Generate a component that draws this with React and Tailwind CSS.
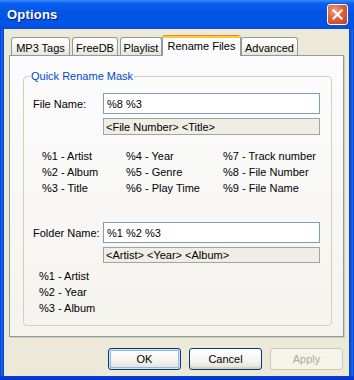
import React from 'react';

const fileVars = [
  ['%1 - Artist', '%4 - Year', '%7 - Track number'],
  ['%2 - Album', '%5 - Genre', '%8 - File Number'],
  ['%3 - Title', '%6 - Play Time', '%9 - File Name'],
];

const folderVars = ['%1 - Artist', '%2 - Year', '%3 - Album'];

const tabs = [
  { label: 'MP3 Tags', w: 'w-[59px]' },
  { label: 'FreeDB', w: 'w-[46px] ml-[2px]' },
  { label: 'Playlist', w: 'w-[42px] ml-[2px]' },
  { label: 'Rename Files', w: 'w-[79px]', active: true },
  { label: 'Advanced', w: 'w-[57px]' },
];

function TitleBar() {
  return (
    <div className="h-[29px] shrink-0 flex items-center justify-between pl-[7px] pr-[6px] bg-[linear-gradient(to_bottom,#3A8CFF_0%,#0A5FF0_12%,#0054E3_45%,#0055E8_85%,#0A4BD0_100%)]">
      <span className="text-white font-bold text-[13px] tracking-[0.2px] [text-shadow:1px_1px_0_#0A1E8C]">Options</span>
      <button className="w-[21px] h-[21px] rounded-[3px] border border-white flex items-center justify-center bg-[radial-gradient(circle_at_35%_30%,#F2A08A_0%,#E0603C_45%,#C63A1C_100%)]">
        <svg width="11" height="11" viewBox="0 0 11 11">
          <path d="M1.5 1.5 L9.5 9.5 M9.5 1.5 L1.5 9.5" stroke="white" strokeWidth="2.2" strokeLinecap="square" />
        </svg>
      </button>
    </div>
  );
}

function Tab({ label, w, active }) {
  if (active) {
    return (
      <div className={`${w} h-[21px] -mb-px relative z-10 flex flex-col rounded-t-[3px] border-x border-[#919B9C] bg-[#FCFCFE] overflow-hidden`}>
        <div className="h-[1px] bg-[#E68B2C]" />
        <div className="h-[2px] bg-[#FFC73C]" />
        <div className="flex-1 flex items-start justify-center pt-[1px]">{label}</div>
      </div>
    );
  }
  return (
    <div className={`${w} h-[18px] flex items-center justify-center pt-[2px] rounded-t-[3px] border border-b-0 border-[#919B9C] bg-[linear-gradient(to_bottom,#FFFFFF,#F3F3EF_60%,#E6E4DA)]`}>
      {label}
    </div>
  );
}

function Button({ children, primary, disabled }) {
  if (disabled) {
    return (
      <button className="w-[73px] h-[22px] rounded-[3px] border border-[#C9C7BA] bg-[#F5F4EA] text-[#ACA899]">
        {children}
      </button>
    );
  }
  return (
    <button
      className={`w-[73px] h-[22px] rounded-[3px] border border-[#003C74] bg-[linear-gradient(to_bottom,#FFFFFF,#F4F3EE_60%,#E3DFD3)] ${
        primary ? 'shadow-[inset_0_0_0_1px_#CEE7FF,inset_0_0_0_2px_#98B4E8]' : 'shadow-[inset_0_-2px_0_#D6D0C5]'
      }`}
    >
      {children}
    </button>
  );
}

export default function App() {
  return (
    <div className="w-[354px] h-[380px] flex flex-col bg-[#0054E3] font-['Liberation_Sans',Arial,sans-serif] text-[11px] leading-[14px] text-black overflow-hidden">
      <TitleBar />
      <div className="flex flex-1">
        <div className="w-[4px] bg-[linear-gradient(to_right,#0831D9,#166AEE_40%,#0855DD_70%,#0742C7)]" />
        <div className="flex-1 flex flex-col bg-[#ECE9D8]">
          <div className="flex items-end h-[26px] ml-[7px]">
            {tabs.map((t) => (
              <Tab key={t.label} {...t} />
            ))}
          </div>
          <div className="mx-[5px] h-[282px] border border-[#919B9C] bg-[linear-gradient(to_bottom,#FCFCFE,#F4F3EE)] shadow-[1px_1px_0_#D0CEBF] pt-[13px] pl-[13px] pr-[11px]">
            <fieldset className="border border-[#D0D0BF] rounded-[4px] pb-[9px]">
              <legend className="ml-[6px] px-[1px] text-[#0046D5]">Quick Rename Mask</legend>

              <div className="flex items-center mt-[10px]">
                <span className="w-[79px] pl-[9px]">File Name:</span>
                <div className="w-[217px] h-[21px] border border-[#7F9DB9] bg-white flex items-center pl-[3px]">%8 %3</div>
              </div>
              <div className="ml-[79px] mt-[4px] w-[217px] h-[17px] border border-[#A0A4A8] bg-[#EFEDE4] flex items-center pl-[2px]">
                &lt;File Number&gt; &lt;Title&gt;
              </div>

              <div className="grid grid-cols-[84px_97px_1fr] pl-[18px] mt-[13px] leading-[16px]">
                {fileVars.flat().map((v) => (
                  <span key={v}>{v}</span>
                ))}
              </div>

              <div className="flex items-center mt-[26px]">
                <span className="w-[79px] pl-[9px]">Folder Name:</span>
                <div className="w-[217px] h-[21px] border border-[#7F9DB9] bg-white flex items-center pl-[3px]">%1 %2 %3</div>
              </div>
              <div className="ml-[79px] mt-[4px] w-[217px] h-[16px] border border-[#A0A4A8] bg-[#EFEDE4] flex items-center pl-[2px]">
                &lt;Artist&gt; &lt;Year&gt; &lt;Album&gt;
              </div>

              <div className="flex flex-col pl-[15px] mt-[5px] leading-[16px]">
                {folderVars.map((v) => (
                  <span key={v}>{v}</span>
                ))}
              </div>
            </fieldset>
          </div>
          <div className="flex justify-end gap-[8px] mt-[11px] mr-[6px]">
            <Button primary>OK</Button>
            <Button>Cancel</Button>
            <Button disabled>Apply</Button>
          </div>
        </div>
        <div className="w-[5px] bg-[linear-gradient(to_right,#0742C7,#0855DD_40%,#166AEE_70%,#0831D9)]" />
      </div>
      <div className="h-[4px] shrink-0 bg-[linear-gradient(to_bottom,#0742C7,#0831D9)]" />
    </div>
  );
}
